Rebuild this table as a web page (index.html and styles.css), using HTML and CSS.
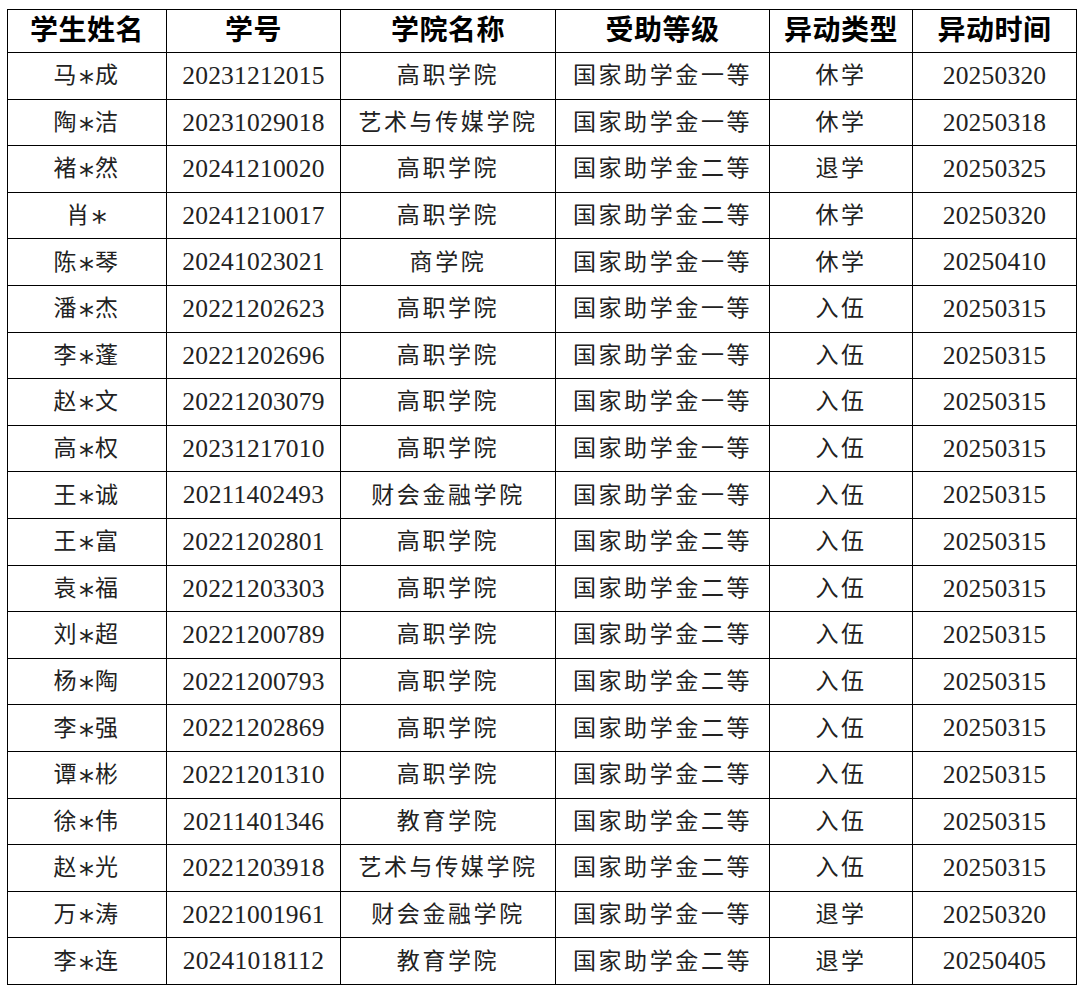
FILE: index.html
```html
<!DOCTYPE html>
<html lang="zh-CN">
<head>
<meta charset="utf-8">
<title>受助学生异动名单</title>
<link rel="stylesheet" href="styles.css">
</head>
<body>
<div class="page">
<table class="grid">
<colgroup>
<col class="c1"><col class="c2"><col class="c3"><col class="c4"><col class="c5"><col class="c6">
</colgroup>
<thead>
<tr class="head"><th>学生姓名</th><th>学号</th><th>学院名称</th><th>受助等级</th><th>异动类型</th><th>异动时间</th></tr>
</thead>
<tbody>
<tr><td>马<span class="star">*</span>成</td><td class="num">20231212015</td><td>高职学院</td><td>国家助学金一等</td><td>休学</td><td class="num">20250320</td></tr>
<tr><td>陶<span class="star">*</span>洁</td><td class="num">20231029018</td><td>艺术与传媒学院</td><td>国家助学金一等</td><td>休学</td><td class="num">20250318</td></tr>
<tr><td>褚<span class="star">*</span>然</td><td class="num">20241210020</td><td>高职学院</td><td>国家助学金二等</td><td>退学</td><td class="num">20250325</td></tr>
<tr><td>肖<span class="star">*</span></td><td class="num">20241210017</td><td>高职学院</td><td>国家助学金二等</td><td>休学</td><td class="num">20250320</td></tr>
<tr><td>陈<span class="star">*</span>琴</td><td class="num">20241023021</td><td>商学院</td><td>国家助学金一等</td><td>休学</td><td class="num">20250410</td></tr>
<tr><td>潘<span class="star">*</span>杰</td><td class="num">20221202623</td><td>高职学院</td><td>国家助学金一等</td><td>入伍</td><td class="num">20250315</td></tr>
<tr><td>李<span class="star">*</span>蓬</td><td class="num">20221202696</td><td>高职学院</td><td>国家助学金一等</td><td>入伍</td><td class="num">20250315</td></tr>
<tr><td>赵<span class="star">*</span>文</td><td class="num">20221203079</td><td>高职学院</td><td>国家助学金一等</td><td>入伍</td><td class="num">20250315</td></tr>
<tr><td>高<span class="star">*</span>权</td><td class="num">20231217010</td><td>高职学院</td><td>国家助学金一等</td><td>入伍</td><td class="num">20250315</td></tr>
<tr><td>王<span class="star">*</span>诚</td><td class="num">20211402493</td><td>财会金融学院</td><td>国家助学金一等</td><td>入伍</td><td class="num">20250315</td></tr>
<tr><td>王<span class="star">*</span>富</td><td class="num">20221202801</td><td>高职学院</td><td>国家助学金二等</td><td>入伍</td><td class="num">20250315</td></tr>
<tr><td>袁<span class="star">*</span>福</td><td class="num">20221203303</td><td>高职学院</td><td>国家助学金二等</td><td>入伍</td><td class="num">20250315</td></tr>
<tr><td>刘<span class="star">*</span>超</td><td class="num">20221200789</td><td>高职学院</td><td>国家助学金二等</td><td>入伍</td><td class="num">20250315</td></tr>
<tr><td>杨<span class="star">*</span>陶</td><td class="num">20221200793</td><td>高职学院</td><td>国家助学金二等</td><td>入伍</td><td class="num">20250315</td></tr>
<tr><td>李<span class="star">*</span>强</td><td class="num">20221202869</td><td>高职学院</td><td>国家助学金二等</td><td>入伍</td><td class="num">20250315</td></tr>
<tr><td>谭<span class="star">*</span>彬</td><td class="num">20221201310</td><td>高职学院</td><td>国家助学金二等</td><td>入伍</td><td class="num">20250315</td></tr>
<tr><td>徐<span class="star">*</span>伟</td><td class="num">20211401346</td><td>教育学院</td><td>国家助学金二等</td><td>入伍</td><td class="num">20250315</td></tr>
<tr><td>赵<span class="star">*</span>光</td><td class="num">20221203918</td><td>艺术与传媒学院</td><td>国家助学金二等</td><td>入伍</td><td class="num">20250315</td></tr>
<tr><td>万<span class="star">*</span>涛</td><td class="num">20221001961</td><td>财会金融学院</td><td>国家助学金一等</td><td>退学</td><td class="num">20250320</td></tr>
<tr><td>李<span class="star">*</span>连</td><td class="num">20241018112</td><td>教育学院</td><td>国家助学金二等</td><td>退学</td><td class="num">20250405</td></tr>
</tbody>
</table>
</div>
</body>
</html>
```
FILE: styles.css
```css
html, body {
  margin: 0;
  padding: 0;
  background: #fff;
}
.page {
  padding: 9px 0 0 7px;
}
.grid {
  border-collapse: collapse;
  table-layout: fixed;
  width: 1069px;
  font-family: "Liberation Serif", "Noto Sans CJK SC", serif;
  color: #222;
}
.c1 { width: 159px; }
.c2 { width: 174px; }
.c3 { width: 215px; }
.c4 { width: 214px; }
.c5 { width: 143px; }
.c6 { width: 164px; }
.grid th, .grid td {
  border: 1px solid #000;
  text-align: center;
  padding: 0;
  white-space: nowrap;
  overflow: hidden;
}
.head th {
  height: 42px;
  font-size: 28px;
  font-weight: 700;
  color: #000;
  line-height: 1;
  letter-spacing: 0.5px;
}
.grid td {
  height: 45.6px;
  font-size: 23px;
  line-height: 1;
  letter-spacing: 2.6px;
}
.grid td.num {
  font-size: 25.5px;
  letter-spacing: 0.2px;
}
.star {
  font-family: "DejaVu Sans", sans-serif;
  font-size: 30px;
  line-height: 0;
  vertical-align: -0.3em;
  letter-spacing: 1px;
}
```
